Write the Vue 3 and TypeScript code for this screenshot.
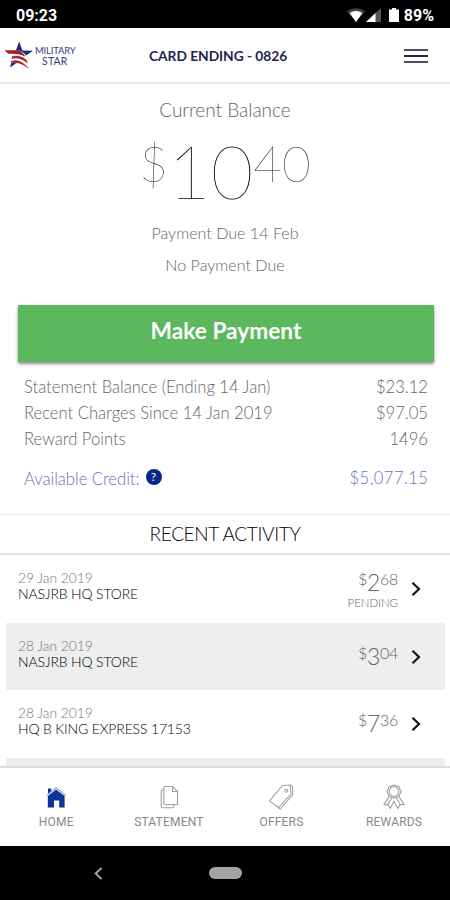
<script setup lang="ts">
interface Activity {
  date: string
  store: string
  dollars: string
  cents: string
  pending?: boolean
}

const summary = [
  { label: 'Statement Balance (Ending 14 Jan)', value: '$23.12' },
  { label: 'Recent Charges Since 14 Jan 2019', value: '$97.05' },
  { label: 'Reward Points', value: '1496' },
]

const activity: Activity[] = [
  { date: '29 Jan 2019', store: 'NASJRB HQ STORE', dollars: '2', cents: '68', pending: true },
  { date: '28 Jan 2019', store: 'NASJRB HQ STORE', dollars: '3', cents: '04' },
  { date: '28 Jan 2019', store: 'HQ B KING EXPRESS 17153', dollars: '7', cents: '36' },
]
</script>

<template>
  <div class="screen">
    <div class="status">
      <span class="clock">09:23</span>
      <span class="indicators">
        <svg class="wifi" width="18" height="14" viewBox="0 0 18 14">
          <path d="M0 3.2Q9-2.6 18 3.2L9 14Z" fill="#444" />
          <path d="M2.6 5Q9 1 15.4 5L9 14Z" fill="#fff" />
        </svg>
        <svg class="signal" width="15" height="14" viewBox="0 0 15 14">
          <path d="M0 14L15 0V14Z" fill="#555" />
          <path d="M0 14L9.5 5V14Z" fill="#fff" />
        </svg>
        <svg class="battery" width="10" height="14" viewBox="0 0 10 14">
          <path d="M0 1.6H3V0H7V1.6H10V14H0Z" fill="#fff" />
        </svg>
        <span class="percent">89%</span>
      </span>
    </div>

    <header class="header">
      <div class="logo">
        <svg width="29" height="28" viewBox="0 0 29 28">
          <path d="M14.2 0.5L17.4 9.6L28 9.8L21.2 14.6Q17.5 9.2 10.8 9.4Z" fill="#182a86" />
          <path d="M0.5 9.8H11Q16.5 10 19.6 14.8Q14 11.8 3.2 12.2Z" fill="#a4212b" stroke="#a4212b" />
          <path d="M7 15.6Q15 13.6 21.4 19.2L22.4 22Q15 15.6 7 17.4Z" fill="#a4212b" stroke="#a4212b" stroke-width=".5" />
          <path d="M6.4 20.2Q15 17.2 23.2 27Q15.4 20.4 6 21.6Z" fill="#a4212b" stroke="#a4212b" stroke-width=".5" />
          <path d="M6 22.3L12.4 21.3L5.2 26.6Z" fill="#182a86" />
        </svg>
        <div class="wordmark"><span>MILITARY</span><span class="star">STAR</span></div>
      </div>
      <h1 class="card">CARD ENDING - 0826</h1>
      <div class="menu"><i></i><i></i><i></i></div>
    </header>

    <section class="balance">
      <div class="caption">Current Balance</div>
      <div class="total">
        <span class="sup">$</span><span class="whole">10</span><span class="sup cents">40</span>
      </div>
      <div class="due">Payment Due 14 Feb</div>
      <div class="due none">No Payment Due</div>
    </section>

    <button class="pay">Make Payment</button>

    <section class="summary">
      <div v-for="s in summary" :key="s.label" class="line">
        <span>{{ s.label }}</span><span>{{ s.value }}</span>
      </div>
      <div class="line credit">
        <span class="with-help">Available Credit:<b class="help">?</b></span>
        <span class="credit-value">$5,077.15</span>
      </div>
    </section>

    <h2 class="heading">RECENT ACTIVITY</h2>

    <main class="list">
      <div v-for="(a, i) in activity" :key="i" class="row">
        <div class="info">
          <div class="date">{{ a.date }}</div>
          <div class="store">{{ a.store }}</div>
        </div>
        <div class="amount" :class="{ settled: !a.pending }">
          <div class="price"><span class="small">$</span><span>{{ a.dollars }}</span><span class="small">{{ a.cents }}</span></div>
          <div v-if="a.pending" class="pending">PENDING</div>
        </div>
        <svg class="chevron" width="10" height="16" viewBox="0 0 10 16">
          <path d="M1.5 1.8L8 8L1.5 14.2" fill="none" stroke="#111" stroke-width="2.2" />
        </svg>
      </div>
      <div class="row"></div>
    </main>

    <nav class="tabs">
      <div class="tab">
        <svg width="26" height="26" viewBox="0 0 26 26">
          <path d="M4.8 12L13 5.5L21.6 12V23.5H16.2V16.5H11V23.5H4.8Z" fill="#0d339b" />
          <path d="M3.5 11.5L13 3.8L22.8 11.5" fill="none" stroke="#6d7fae" stroke-width="1" />
          <path d="M5 4.5H8.2V7L5 9.8Z" fill="#0d339b" />
        </svg>
        <span>HOME</span>
      </div>
      <div class="tab">
        <svg width="26" height="26" viewBox="0 0 26 26" fill="none" stroke="#a0a0a0" stroke-width="1.1">
          <path d="M9 2.5H16.5L21.5 7.5V20.5H9Q7.8 20.5 7.8 19.3V3.7Q7.8 2.5 9 2.5Z" />
          <path d="M16.5 2.5V7.5H21.5M7.8 6H6.6Q5.2 6 5.2 7.4V22.5Q5.2 23.7 6.4 23.7H16.5Q17.7 23.7 17.7 22.5V20.5" />
        </svg>
        <span>STATEMENT</span>
      </div>
      <div class="tab">
        <svg width="26" height="26" viewBox="0 0 26 26" fill="none" stroke="#a0a0a0" stroke-width="1.1">
          <path d="M14.5 1.5L22 1L23 10L10.5 23.5L1.5 17Z" />
          <path d="M22 1L24.6 2.6V11L12 25L10.5 23.5" />
          <circle cx="18.2" cy="6.8" r="1.5" />
        </svg>
        <span>OFFERS</span>
      </div>
      <div class="tab">
        <svg width="26" height="26" viewBox="0 0 26 26" fill="none" stroke="#a0a0a0" stroke-width="1.1">
          <path d="M13 1L15.4 2.1L18 2.4L18.8 5L20.2 7.5L18.9 9.9L18 12.6L15.4 13L13 14.2L10.6 13L8 12.6L7.1 9.9L5.8 7.5L7.2 5L8 2.4L10.6 2.1Z" />
          <circle cx="13" cy="7.5" r="4.8" />
          <path d="M8 12.6L3 20.5L6.8 20.6L9.3 24.5L13 17.2L16.7 24.5L19.2 20.6L23 20.5L18 12.6M10.8 13.6L7 20.5M15.2 13.6L19 20.5" />
        </svg>
        <span>REWARDS</span>
      </div>
    </nav>

    <div class="system">
      <svg class="back" width="9" height="13" viewBox="0 0 9 13">
        <path d="M7.5 1L1.7 6.5L7.5 12" fill="none" stroke="#a3a3a3" stroke-width="2" />
      </svg>
      <div class="pill"></div>
    </div>
  </div>
</template>

<style>
body {
  margin: 0;
  background: #fff;
}
</style>

<style scoped>
.screen {
  box-sizing: border-box;
  width: 450px;
  height: 900px;
  overflow: hidden;
  display: flex;
  flex-direction: column;
  background: #fff;
  font-family: Lato, "Liberation Sans", sans-serif;
  font-weight: 300;
  color: #666;
  white-space: nowrap;
}
.screen > * {
  flex: none;
  box-sizing: border-box;
}
.status {
  height: 28px;
  padding: 2px 16px 0;
  display: flex;
  align-items: center;
  justify-content: space-between;
  background: #000;
  color: #fff;
  font-family: Roboto, sans-serif;
  font-weight: 700;
  font-size: 16px;
}
.indicators {
  display: flex;
  align-items: center;
}
.signal {
  margin-left: 1px;
}
.battery {
  margin: 0 5px 0 8px;
}
.header {
  height: 56px;
  padding: 0 22px 0 5px;
  border-bottom: 2px solid #e9e9e9;
  display: grid;
  grid-template-columns: 144px 1fr 24px;
  align-items: center;
}
.logo {
  display: flex;
  align-items: center;
}
.wordmark {
  display: flex;
  flex-direction: column;
  align-items: flex-start;
  padding: 3px 0 0 1px;
  font-size: 9.5px;
  line-height: 10px;
  font-weight: 400;
  color: #353b83;
  letter-spacing: -0.2px;
}
.wordmark .star {
  margin-left: 7px;
  font-size: 10.5px;
  line-height: 11px;
  letter-spacing: 0.2px;
}
.card {
  margin: 1px 0 0;
  font-size: 13.8px;
  line-height: 20px;
  font-weight: 700;
  letter-spacing: -0.05px;
  color: #1f2352;
}
.menu {
  display: flex;
  flex-direction: column;
  gap: 4px;
  padding-top: 1px;
}
.menu i {
  height: 2px;
  background: #4a4b6c;
}
.menu i:nth-child(2) {
  background: #23254b;
}
.balance {
  height: 221px;
  padding-top: 14px;
  display: flex;
  flex-direction: column;
  align-items: center;
}
.caption {
  font-size: 19px;
  line-height: 23px;
}
.total {
  display: flex;
  align-items: flex-start;
  height: 73px;
  margin-top: 13px;
  font-weight: 100;
  color: #000;
}
.whole {
  font-size: 73.5px;
  line-height: 73px;
}
.sup {
  font-size: 49.5px;
  line-height: 49px;
  padding-top: 5px;
  color: #111;
}
.due {
  margin-top: 15px;
  font-size: 16.1px;
  line-height: 22px;
}
.due.none {
  margin-top: 10px;
}
.pay {
  width: 416px;
  height: 57px;
  margin: 0 0 0 18px;
  padding: 0 0 6px;
  border: 0;
  background: #5bb85c;
  box-shadow: 0 2px 3px rgba(0, 0, 0, 0.45);
  color: #fff;
  font-family: inherit;
  font-size: 22.7px;
  font-weight: 700;
}
.summary {
  height: 152px;
  padding: 13px 22px 0 24px;
}
.line {
  display: flex;
  justify-content: space-between;
  height: 26px;
  font-size: 16.6px;
  line-height: 24px;
}
.credit {
  margin-top: 13px;
  color: #6672b5;
}
.credit-value {
  letter-spacing: 0.45px;
  margin-right: -0.45px;
}
.with-help {
  display: flex;
  align-items: center;
}
.help {
  width: 16px;
  height: 16px;
  margin: -5px 0 0 6px;
  border-radius: 50%;
  background: #08278c;
  color: #fff;
  font-size: 12px;
  line-height: 16px;
  text-align: center;
  font-weight: 400;
}
.heading {
  height: 41px;
  margin: 0;
  border-top: 1px solid #e8e8e8;
  border-bottom: 2px solid #e3e3e3;
  text-align: center;
  font-size: 19px;
  line-height: 37px;
  font-weight: 300;
  letter-spacing: -0.35px;
  color: #000;
}
.list {
  height: 211px;
  overflow: hidden;
  padding: 0 5px 0 6px;
}
.row {
  box-sizing: border-box;
  height: 67.7px;
  padding: 14px 24px 0 12px;
  display: flex;
}
.row:nth-child(even) {
  background: #eee;
}
.info {
  flex: 1;
}
.date {
  font-size: 13.8px;
  line-height: 17px;
  color: #777;
}
.store {
  font-size: 14px;
  line-height: 16px;
  font-weight: 300;
  letter-spacing: -0.15px;
  color: #000;
}
.amount {
  text-align: right;
}
.amount.settled {
  padding-top: 6px;
}
.price {
  display: flex;
  justify-content: flex-end;
  font-size: 23px;
  line-height: 27px;
  letter-spacing: -0.3px;
}
.price .small {
  font-size: 16px;
  line-height: 20px;
}
.pending {
  font-size: 11.4px;
  line-height: 14px;
}
.chevron {
  margin: 12px 0 0 13px;
}
.tabs {
  height: 80px;
  padding-top: 16px;
  border-top: 2px solid #ddd;
  display: grid;
  grid-template-columns: repeat(4, 112.6px);
}
.tab {
  display: flex;
  flex-direction: column;
  align-items: center;
  font-family: Roboto, sans-serif;
  font-size: 12px;
  font-weight: 400;
  line-height: 16px;
  letter-spacing: 0.2px;
  color: #888;
}
.tab span {
  margin-top: 4px;
}
.system {
  height: 54px;
  padding-left: 94px;
  display: flex;
  align-items: center;
  background: #000;
}
.pill {
  width: 33px;
  height: 12px;
  margin-left: 106px;
  border-radius: 6px;
  background: #a3a3a3;
}
</style>
